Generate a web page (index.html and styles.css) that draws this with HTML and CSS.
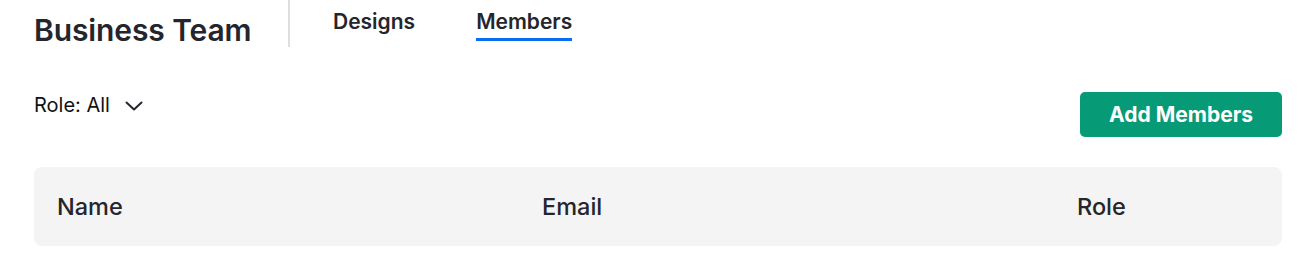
FILE: index.html
```html
<!DOCTYPE html>
<html lang="en">
<head>
<meta charset="utf-8">
<title>Business Team</title>
<link rel="stylesheet" href="styles.css">
</head>
<body>
<div class="page">
  <header class="topbar">
    <h1 class="team-title">Business Team</h1>
    <nav class="tabs">
      <a class="tab">Designs</a>
      <a class="tab tab-active">Members</a>
    </nav>
  </header>
  <div class="toolbar">
    <button class="role-filter">
      <span>Role: All</span>
      <svg class="chevron" width="18" height="10" viewBox="0 0 18 10"><path d="M1.5 1.5 L9 8.5 L16.5 1.5" fill="none" stroke="#25252d" stroke-width="2" stroke-linecap="round" stroke-linejoin="round"/></svg>
    </button>
    <button class="add-btn">Add Members</button>
  </div>
  <div class="table-head">
    <div class="col">Name</div>
    <div class="col">Email</div>
    <div class="col">Role</div>
  </div>
</div>
</body>
</html>
```

FILE: styles.css
```css
* { box-sizing: border-box; }
html, body { margin: 0; padding: 0; background: #fff; }
body {
  font-family: Inter, "Noto Sans", sans-serif;
  color: #25252d;
}
.page {
  width: 1248px;
  margin-left: 34px;
}
.topbar {
  display: flex;
  align-items: flex-start;
  height: 47px;
}
.team-title {
  margin: 0;
  font-size: 30px;
  font-weight: 600;
  line-height: 36px;
  padding-top: 12px;
  width: 254px;
  letter-spacing: -0.1px;
}
.tabs {
  display: flex;
  gap: 61px;
  border-left: 2px solid #dedede;
  height: 47px;
  padding-left: 43px;
}
.tab {
  font-size: 21px;
  font-weight: 600;
  line-height: 24px;
  padding-top: 10px;
  height: 41px;
  border-bottom: 3px solid transparent;
}
.tab-active { border-bottom-color: #0a6cf5; }
.toolbar {
  display: flex;
  justify-content: space-between;
  align-items: flex-start;
  margin-top: 45px;
  height: 75px;
}
.role-filter {
  display: flex;
  align-items: center;
  gap: 15px;
  border: 0;
  background: none;
  padding: 0;
  font-family: inherit;
  font-size: 20px;
  color: #111;
  line-height: 26px;
}
.chevron { margin-top: 1px; }
.add-btn {
  width: 202px;
  height: 45px;
  border: 0;
  border-radius: 5px;
  background: #069b76;
  color: #fff;
  font-family: inherit;
  font-size: 21px;
  font-weight: 700;
}
.table-head {
  display: grid;
  grid-template-columns: 485px 535px 1fr;
  align-items: center;
  height: 79px;
  padding: 0 23px;
  background: #f4f4f4;
  border-radius: 8px;
}
.col {
  font-size: 23.5px;
  font-weight: 500;
  color: #25252d;
}
```
